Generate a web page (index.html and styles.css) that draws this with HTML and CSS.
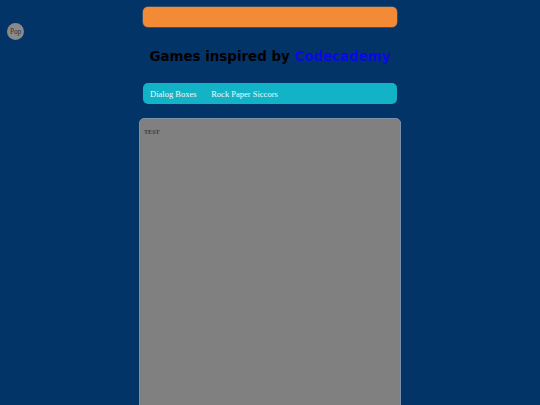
FILE: index.html
```html
<!DOCTYPE html>
<html>
<head>
<meta charset="utf-8">
<link rel="stylesheet" href="styles.css">
</head>
<body>
<div class="pop">Pop</div>
<div class="container">
  <div class="banner"></div>
  <h1 class="title">Games inspired by <span class="brand">Codecademy</span></h1>
  <nav class="nav">
    <span class="nav-item">Dialog Boxes</span>
    <span class="nav-item">Rock Paper Siccors</span>
  </nav>
  <div class="panel">
    <div class="panel-text">TEST</div>
  </div>
</div>
</body>
</html>
```

FILE: styles.css
```css
html, body {
  margin: 0;
  padding: 0;
  background: #023468;
  overflow: hidden;
}
body {
  height: 405px;
}
.pop {
  position: absolute;
  left: 7px;
  top: 23px;
  width: 17px;
  height: 17px;
  border-radius: 50%;
  background: #8a8a8a;
  color: #333;
  font-family: "Liberation Serif", serif;
  font-size: 7.2px;
  display: flex;
  align-items: center;
  justify-content: center;
}
.container {
  width: 262px;
  margin: 0 auto;
  padding-top: 7px;
}
.banner {
  margin: 0 4px;
  height: 20px;
  border-radius: 5px;
  background: #f28a36;
  box-shadow: 0 0 0 0.5px #7a6a60;
}
.title {
  margin: 22px 0 19px;
  font-family: "DejaVu Sans", Verdana, sans-serif;
  font-weight: bold;
  font-size: 13.4px;
  line-height: normal;
  text-align: center;
  color: #000;
  white-space: nowrap;
}
.brand {
  color: #0a0ae0;
}
.nav {
  margin: 0 4px;
  height: 21px;
  box-sizing: border-box;
  padding-top: 1.5px;
  border-radius: 5px;
  background: #13b3c7;
  display: flex;
  align-items: center;
  gap: 14.7px;
  padding-left: 7px;
}
.nav-item {
  font-family: "Liberation Serif", serif;
  font-size: 8.5px;
  color: #eef8fa;
}
.panel {
  margin-top: 13.5px;
  height: 400px;
  border: 1px solid #7d90a8;
  border-radius: 5px;
  background: #808080;
  padding: 10px 4px;
  box-sizing: border-box;
}
.panel-text {
  font-family: "Liberation Serif", serif;
  font-weight: bold;
  font-size: 6.1px;
  color: #3a3a3a;
}
```
